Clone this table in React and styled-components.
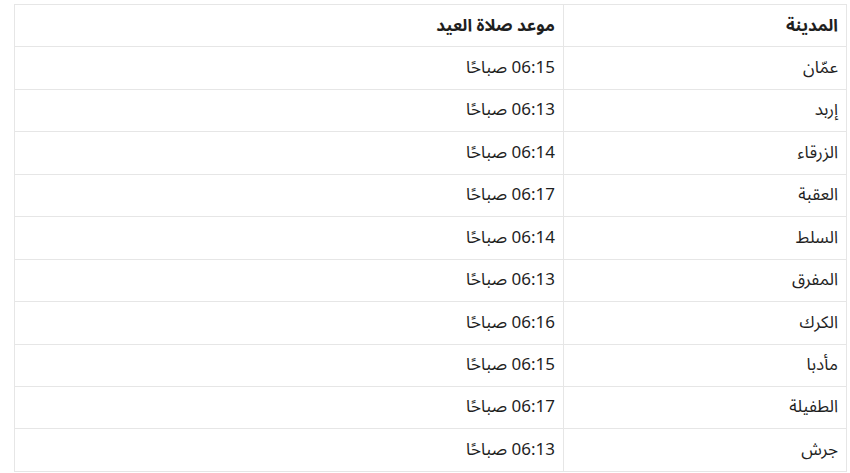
import React from 'react';
import styled, { createGlobalStyle } from 'styled-components';

const GlobalStyle = createGlobalStyle`
  html, body {
    margin: 0;
    padding: 0;
    background: #fff;
  }
  body {
    font-family: 'Noto Sans Arabic', 'Noto Sans', 'DejaVu Sans', sans-serif;
    color: #1f1f1f;
  }
`;

const Page = styled.div`
  padding: 4px 3px 0 14px;
`;

const Table = styled.table`
  direction: rtl;
  width: 100%;
  border-collapse: collapse;
  font-size: 17px;
`;

const Cell = styled.td`
  border: 1px solid #e6e6e6;
  height: 41.45px;
  padding: 0 8px 0 9px;
  text-align: right;
  vertical-align: middle;
  line-height: 1.2;
  font-weight: ${(p) => (p.$head ? 700 : 400)};
  width: ${(p) => (p.$city ? '265px' : 'auto')};
`;

const rows = [
  ['عمّان', '06:15 صباحًا'],
  ['إربد', '06:13 صباحًا'],
  ['الزرقاء', '06:14 صباحًا'],
  ['العقبة', '06:17 صباحًا'],
  ['السلط', '06:14 صباحًا'],
  ['المفرق', '06:13 صباحًا'],
  ['الكرك', '06:16 صباحًا'],
  ['مأدبا', '06:15 صباحًا'],
  ['الطفيلة', '06:17 صباحًا'],
  ['جرش', '06:13 صباحًا'],
];

export default function App() {
  return (
    <Page>
      <GlobalStyle />
      <Table>
        <tbody>
          <tr>
            <Cell $head $city>المدينة</Cell>
            <Cell $head>موعد صلاة العيد</Cell>
          </tr>
          {rows.map(([city, time]) => (
            <tr key={city}>
              <Cell $city>{city}</Cell>
              <Cell>{time}</Cell>
            </tr>
          ))}
        </tbody>
      </Table>
    </Page>
  );
}
